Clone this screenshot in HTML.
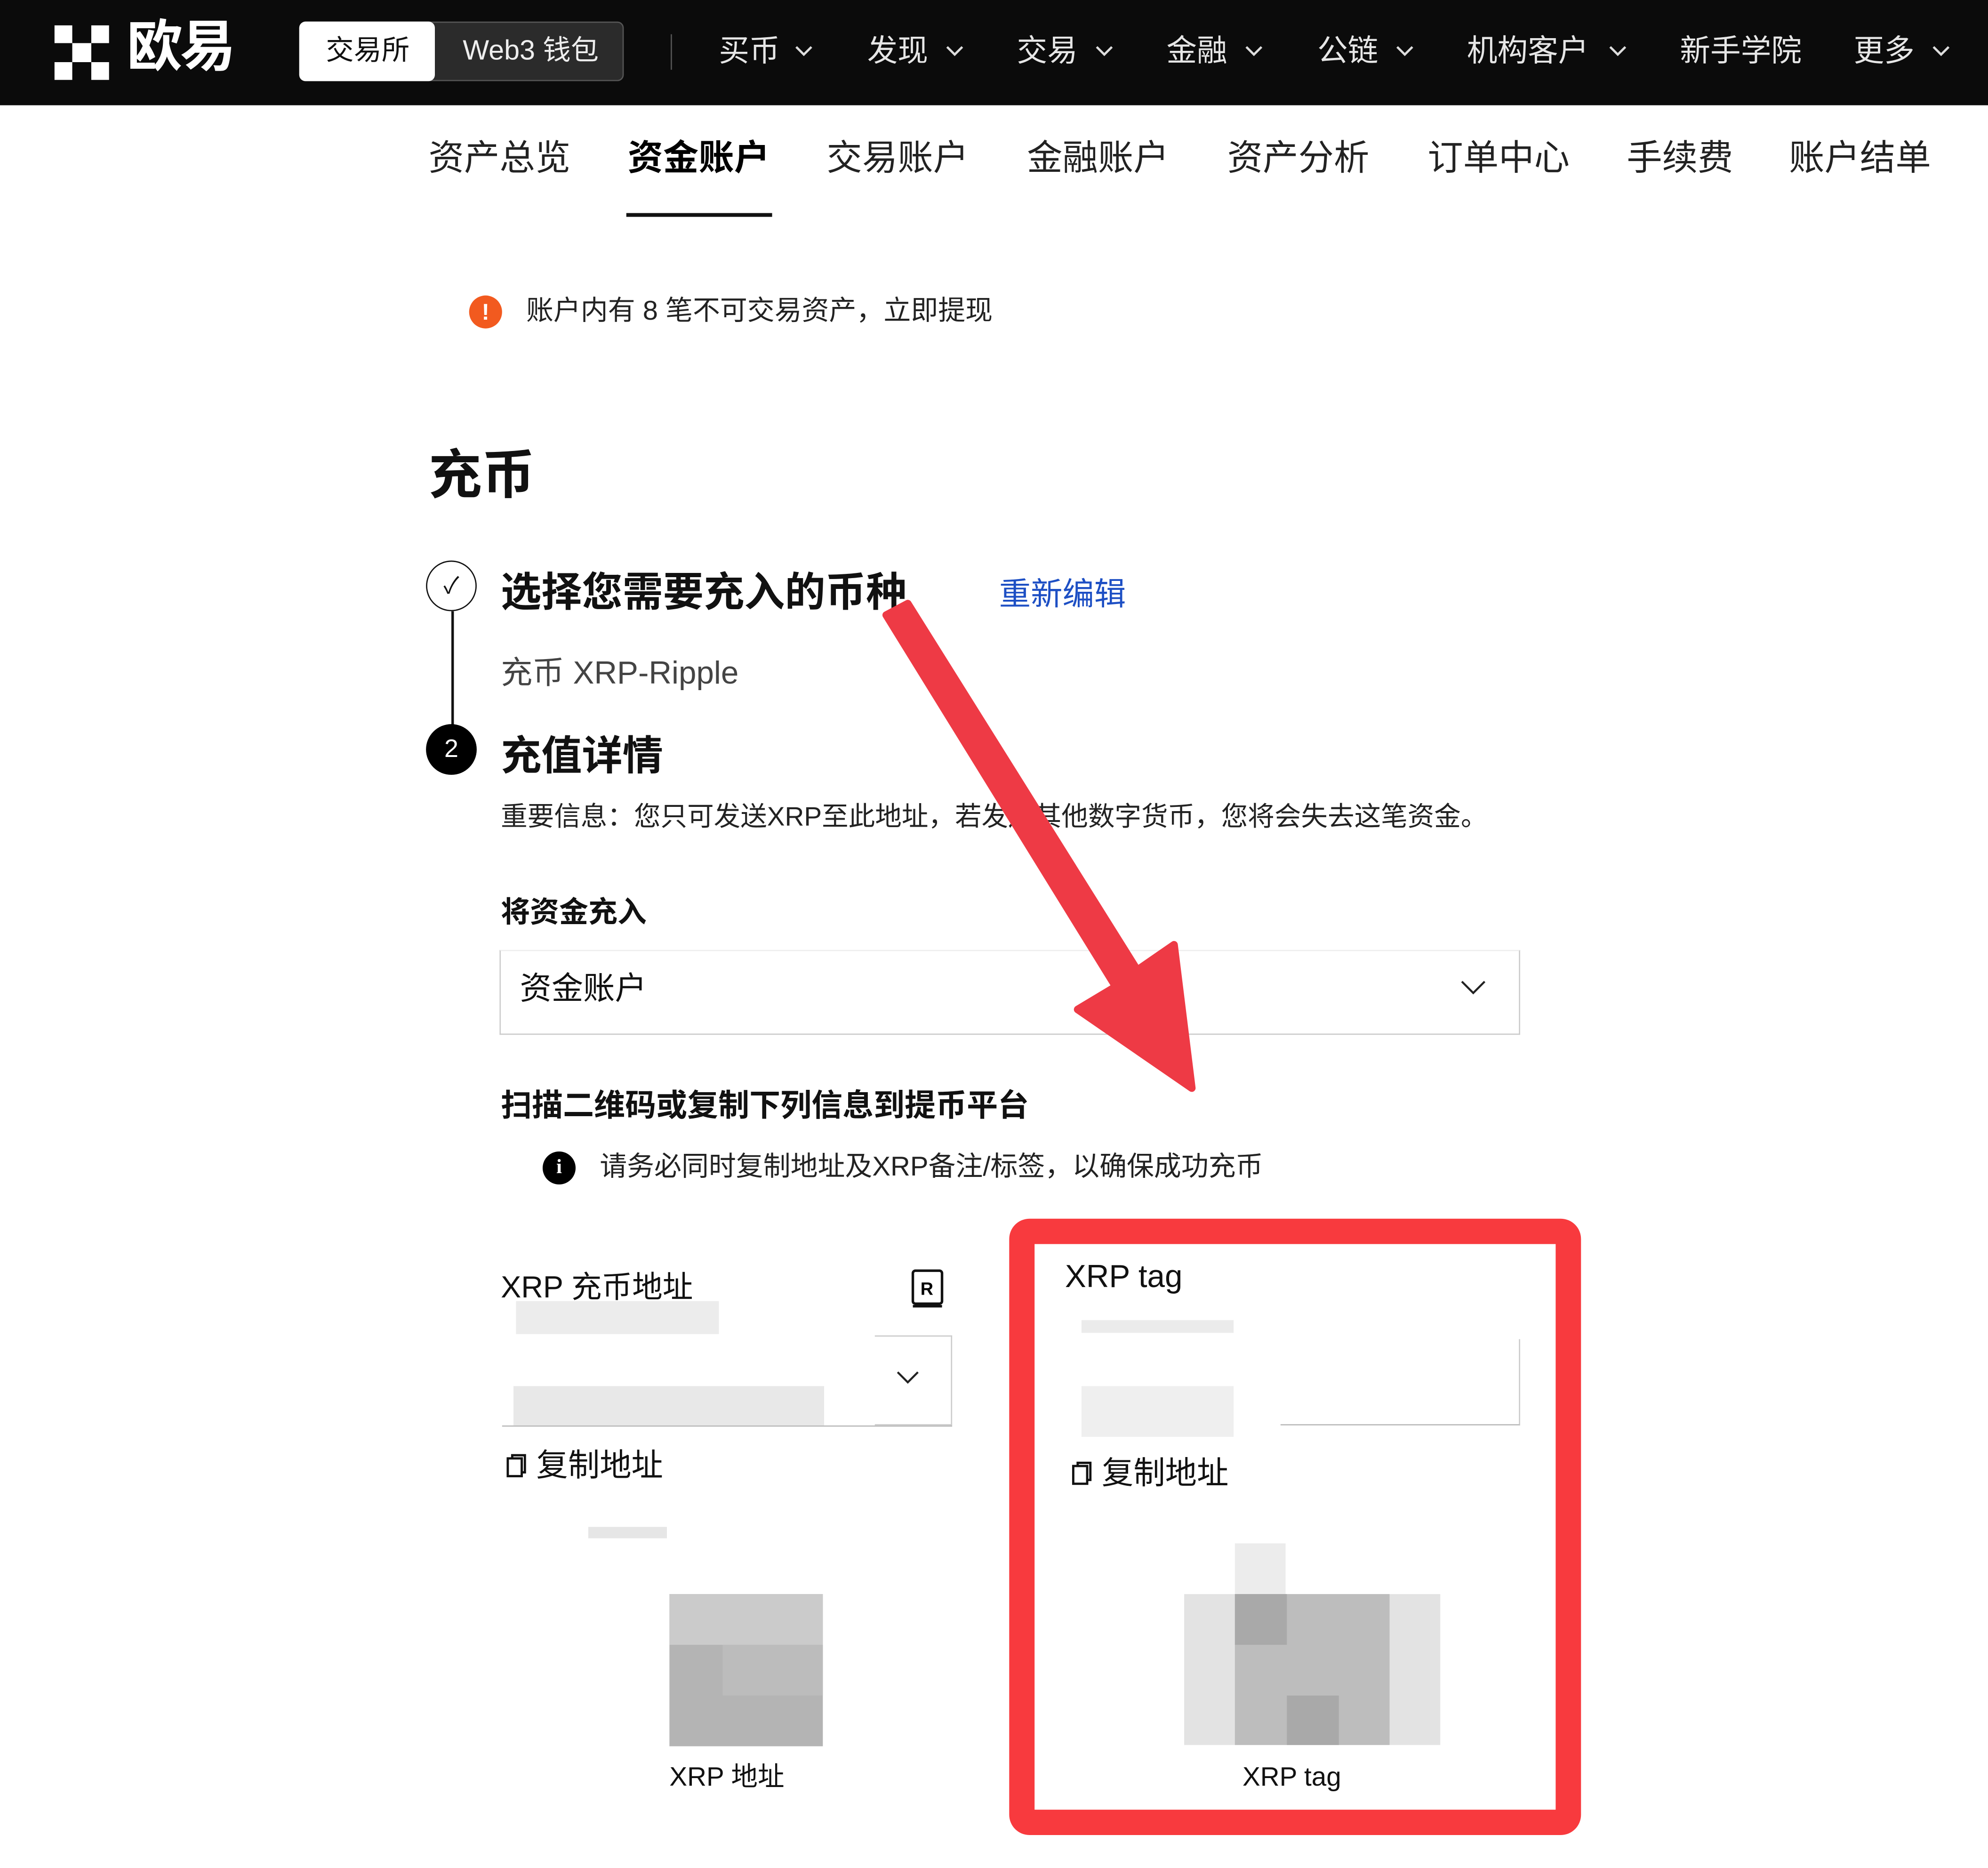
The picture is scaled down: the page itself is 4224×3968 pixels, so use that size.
<!DOCTYPE html>
<html><head><meta charset="utf-8"><style>
html,body{margin:0;padding:0;background:#fff;overflow:hidden}
body{width:4224px;height:3968px}
#s{position:absolute;left:0;top:0;width:1568px;height:1473px;transform:scale(2.69388,2.69383);transform-origin:0 0;font-family:"Liberation Sans","Noto Sans CJK SC",sans-serif;color:#111}
.a{position:absolute;white-space:nowrap;line-height:1}
.nav{color:#e6e6e6;font-size:24px;top:29px}
.ch{position:absolute;top:37px}
.tab{font-size:28px;top:111px;color:#222}
.bl{position:absolute;background:#e6e6e6}
</style></head><body><div id="s">
<div style="position:absolute;left:0;top:0;width:1568px;height:83px;background:#0b0b0b"></div>
<div style="position:absolute;left:43px;top:20px;width:43px;height:43px">
<div style="position:absolute;left:0;top:0;width:14px;height:14px;background:#fff"></div>
<div style="position:absolute;left:29px;top:0;width:14px;height:14px;background:#fff"></div>
<div style="position:absolute;left:14px;top:14px;width:15px;height:15px;background:#fff"></div>
<div style="position:absolute;left:0;top:29px;width:14px;height:14px;background:#fff"></div>
<div style="position:absolute;left:29px;top:29px;width:14px;height:14px;background:#fff"></div>
</div>
<div class="a" style="left:100px;top:16px;font-size:44px;font-weight:bold;color:#fff;letter-spacing:-2px">欧易</div>
<div style="position:absolute;left:236px;top:17px;width:256px;height:47px;border-radius:5px;background:#2b2b2b;border:1px solid #555;box-sizing:border-box"></div>
<div style="position:absolute;left:236px;top:17px;width:107px;height:47px;border-radius:5px;background:#fff"></div>
<div class="a" style="left:257px;top:29px;font-size:22px;color:#111">交易所</div>
<div class="a" style="left:365px;top:29px;font-size:22px;color:#eee">Web3 钱包</div>
<div style="position:absolute;left:529px;top:27px;width:1px;height:28px;background:#555"></div>
<div class="a nav" style="left:567px">买币</div>
<div class="a nav" style="left:684px">发现</div>
<div class="a nav" style="left:802px">交易</div>
<div class="a nav" style="left:920px">金融</div>
<div class="a nav" style="left:1039px">公链</div>
<div class="a nav" style="left:1157px">机构客户</div>
<div class="a nav" style="left:1325px">新手学院</div>
<div class="a nav" style="left:1462px">更多</div>
<svg style="position:absolute;left:0;top:0" width="1568" height="83" fill="none" stroke="#ddd" stroke-width="1.8">
<path d="M628 37l6 6 6-6M747 37l6 6 6-6M865 37l6 6 6-6M983 37l6 6 6-6M1102 37l6 6 6-6M1270 37l6 6 6-6M1525 37l6 6 6-6"/></svg>
<div class="a tab" style="left:338px">资产总览</div>
<div class="a tab" style="left:495px;font-weight:bold;color:#000">资金账户</div>
<div style="position:absolute;left:494px;top:168px;width:115px;height:3px;background:#111"></div>
<div class="a tab" style="left:652px">交易账户</div>
<div class="a tab" style="left:810px">金融账户</div>
<div class="a tab" style="left:968px">资产分析</div>
<div class="a tab" style="left:1126px">订单中心</div>
<div class="a tab" style="left:1283px">手续费</div>
<div class="a tab" style="left:1411px">账户结单</div>
<div style="position:absolute;left:370px;top:233px;width:26px;height:26px;border-radius:50%;background:#f25a1f;color:#fff;font-size:18px;font-weight:bold;text-align:center;line-height:26px">!</div>
<div class="a" style="left:415px;top:235px;font-size:21.5px;color:#222">账户内有 8 笔不可交易资产，立即提现</div>
<div class="a" style="left:338px;top:354px;font-size:42px;font-weight:bold">充币</div>
<div style="position:absolute;left:336px;top:442px;width:38px;height:38px;border-radius:50%;border:1.5px solid #111;text-align:center;line-height:38px;font-size:18px">✓</div>
<div style="position:absolute;left:356px;top:482px;width:1.5px;height:90px;background:#111"></div>
<div class="a" style="left:395px;top:451px;font-size:32px;font-weight:bold">选择您需要充入的币种</div>
<div class="a" style="left:788px;top:457px;font-size:25px;color:#1d4fc4">重新编辑</div>
<div class="a" style="left:395px;top:519px;font-size:25px;color:#444">充币 XRP-Ripple</div>
<div style="position:absolute;left:336px;top:571px;width:40px;height:40px;border-radius:50%;background:#000;color:#fff;text-align:center;line-height:40px;font-size:20px">2</div>
<div class="a" style="left:395px;top:580px;font-size:32px;font-weight:bold">充值详情</div>
<div class="a" style="left:395px;top:634px;font-size:21px;color:#222">重要信息：您只可发送XRP至此地址，若发送其他数字货币，您将会失去这笔资金。</div>
<div class="a" style="left:395px;top:708px;font-size:23px;font-weight:bold">将资金充入</div>
<div style="position:absolute;left:394px;top:749px;width:805px;height:67px;border:1px solid #ccc;box-sizing:border-box;border-top-color:#eee"></div>
<div class="a" style="left:410px;top:768px;font-size:25px">资金账户</div>
<svg style="position:absolute;left:1152px;top:773px" width="20" height="12"><path d="M1 1l9 9 9-9" fill="none" stroke="#222" stroke-width="1.6"/></svg>
<div class="a" style="left:395px;top:861px;font-size:24.5px;font-weight:bold">扫描二维码或复制下列信息到提币平台</div>
<div style="position:absolute;left:428px;top:908px;width:26px;height:26px;border-radius:50%;background:#000;color:#fff;text-align:center;line-height:26px;font-size:16px;font-weight:bold;font-family:'Liberation Serif',serif">i</div>
<div class="a" style="left:473px;top:910px;font-size:21.5px;color:#222">请务必同时复制地址及XRP备注/标签，以确保成功充币</div>
<div class="a" style="left:395px;top:1004px;font-size:24px">XRP 充币地址</div>
<svg style="position:absolute;left:718px;top:1001px" width="28" height="32"><rect x="2" y="1" width="23" height="26" rx="2" fill="none" stroke="#111" stroke-width="2"/><path d="M2 29h23" stroke="#111" stroke-width="2"/><text x="8" y="20" font-size="14" font-family="Liberation Sans" font-weight="bold">R</text></svg>
<div class="bl" style="left:407px;top:1026px;width:160px;height:26px;background:#ececec"></div>
<div style="position:absolute;left:690px;top:1053px;width:61px;height:71px;border:1px solid #ccc;border-left:none;box-sizing:border-box"></div>
<svg style="position:absolute;left:707px;top:1081px" width="18" height="11"><path d="M1 1l8 8 8-8" fill="none" stroke="#222" stroke-width="1.6"/></svg>
<div class="bl" style="left:405px;top:1093px;width:245px;height:31px;background:#e8e8e8"></div>
<div style="position:absolute;left:396px;top:1124px;width:355px;height:1px;background:#bbb"></div>
<svg style="position:absolute;left:399px;top:1146px" width="18" height="20"><rect x="1.5" y="4" width="11" height="14" fill="none" stroke="#111" stroke-width="1.8"/><path d="M5 4V1.5h10V15h-2.5" fill="none" stroke="#111" stroke-width="1.8"/></svg>
<div class="a" style="left:423px;top:1144px;font-size:25px">复制地址</div>
<div class="bl" style="left:464px;top:1204px;width:62px;height:9px;background:#e6e6e6"></div>
<div style="position:absolute;left:528px;top:1257px;width:121px;height:120px;background:#b4b4b4"></div>
<div style="position:absolute;left:528px;top:1257px;width:121px;height:40px;background:#cbcbcb"></div>
<div style="position:absolute;left:570px;top:1297px;width:79px;height:40px;background:#bcbcbc"></div>
<div class="a" style="left:528px;top:1391px;font-size:21px">XRP 地址</div>
<div style="position:absolute;left:796px;top:961px;width:451px;height:486px;border:20px solid #f83a3e;border-radius:16px;box-sizing:border-box;background:#fff"></div>
<div class="a" style="left:840px;top:995px;font-size:25px">XRP tag</div>
<div class="bl" style="left:853px;top:1041px;width:120px;height:10px;background:#ebebeb"></div>
<div class="bl" style="left:853px;top:1093px;width:120px;height:40px;background:#efefef"></div>
<div style="position:absolute;left:1010px;top:1056px;width:189px;height:68px;border-right:1px solid #ccc;border-bottom:1px solid #bbb;box-sizing:border-box"></div>
<svg style="position:absolute;left:845px;top:1152px" width="18" height="20"><rect x="1.5" y="4" width="11" height="14" fill="none" stroke="#111" stroke-width="1.8"/><path d="M5 4V1.5h10V15h-2.5" fill="none" stroke="#111" stroke-width="1.8"/></svg>
<div class="a" style="left:869px;top:1150px;font-size:25px">复制地址</div>
<div style="position:absolute;left:934px;top:1257px;width:202px;height:119px;background:#e3e3e3"></div>
<div style="position:absolute;left:974px;top:1217px;width:40px;height:40px;background:#ececec"></div>
<div style="position:absolute;left:974px;top:1257px;width:122px;height:119px;background:#bdbdbd"></div>
<div style="position:absolute;left:974px;top:1257px;width:41px;height:40px;background:#a9a9a9"></div>
<div style="position:absolute;left:1015px;top:1337px;width:41px;height:39px;background:#a9a9a9"></div>
<div class="a" style="left:980px;top:1391px;font-size:21px">XRP tag</div>
<svg style="position:absolute;left:0;top:0" width="1568" height="1473"><polygon points="699,485 716,476 897,765 926,745 940,858 850,796 880,778" fill="#ee3a45" stroke="#ee3a45" stroke-width="6" stroke-linejoin="round"/></svg>
</div></body></html>
